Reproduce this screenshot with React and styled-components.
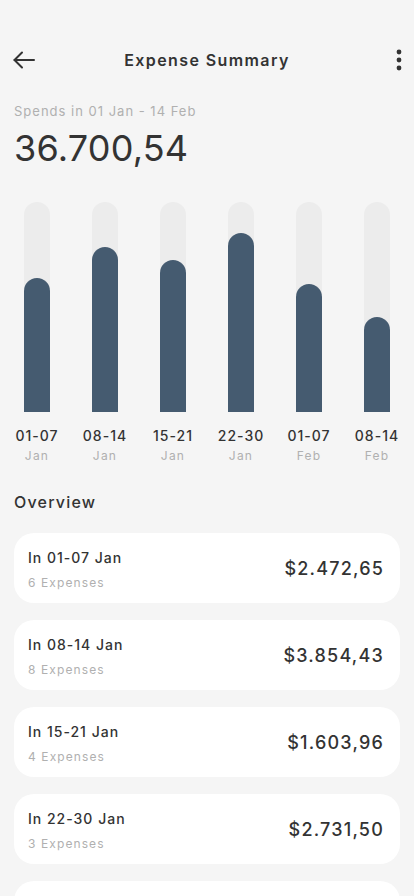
import React from 'react'
import styled, { createGlobalStyle } from 'styled-components'

const GlobalStyle = createGlobalStyle`
  body {
    margin: 0;
    background: #f5f5f5;
    font-family: Inter, "Open Sans", sans-serif;
    color: #333;
  }
`

const Page = styled.div`
  width: 414px;
  min-height: 896px;
  box-sizing: border-box;
  padding: 0 14px 40px;
  background: #f5f5f5;
`

const Header = styled.header`
  height: 120px;
  padding-top: 48px;
  box-sizing: border-box;
  display: flex;
  align-items: flex-start;
  justify-content: space-between;
  margin: 0 -11px 0 -2px;
`

const IconButton = styled.button`
  width: 24px;
  height: 24px;
  padding: 0;
  border: 0;
  background: none;
  display: flex;
  align-items: center;
  justify-content: center;
  color: #333;
`

const Title = styled.h1`
  margin: 2px 9px 0 0;
  font-size: 16px;
  font-weight: 600;
  letter-spacing: 1.4px;
  color: #333;
`

const Subtitle = styled.div`
  margin-top: -17px;
  font-size: 13px;
  letter-spacing: 1px;
  color: #b0b0b0;
`

const Total = styled.div`
  margin-top: 7px;
  font-size: 36px;
  font-weight: 400;
  letter-spacing: 0.2px;
  color: #333;
`

const Chart = styled.div`
  margin-top: 32px;
  display: flex;
  justify-content: space-between;
`

const Column = styled.div`
  width: 46px;
  display: flex;
  flex-direction: column;
  align-items: center;
`

const Track = styled.div`
  width: 26px;
  height: 210px;
  border-radius: 13px 13px 0 0;
  background: #ececec;
  display: flex;
  align-items: flex-end;
`

const Fill = styled.div`
  width: 100%;
  border-radius: 13px 13px 0 0;
  background: #455b70;
`

const Range = styled.div`
  margin-top: 15px;
  font-size: 14px;
  font-weight: 500;
  letter-spacing: 1px;
  color: #333;
  white-space: nowrap;
`

const Month = styled.div`
  margin-top: 4px;
  font-size: 12px;
  letter-spacing: 1.2px;
  color: #b0b0b0;
`

const SectionTitle = styled.h2`
  margin: 29px 0 21px;
  font-size: 16px;
  font-weight: 500;
  letter-spacing: 1.2px;
  color: #333;
`

const List = styled.div`
  display: flex;
  flex-direction: column;
  gap: 17px;
`

const Card = styled.div`
  height: 70px;
  box-sizing: border-box;
  padding: 3px 16px 0 14px;
  border-radius: 20px;
  background: #fff;
  display: flex;
  align-items: center;
  justify-content: space-between;
`

const CardInfo = styled.div`
  display: flex;
  flex-direction: column;
  gap: 9px;
`

const CardTitle = styled.div`
  font-size: 14px;
  font-weight: 500;
  letter-spacing: 1px;
  color: #333;
`

const CardSub = styled.div`
  font-size: 12px;
  letter-spacing: 1.1px;
  color: #b0b0b0;
`

const Amount = styled.div`
  margin-top: -3px;
  font-size: 18px;
  font-weight: 500;
  letter-spacing: 1.2px;
  color: #333;
`

const weeks = [
  { range: '01-07', month: 'Jan', fill: 134, count: 6, amount: '$2.472,65' },
  { range: '08-14', month: 'Jan', fill: 165, count: 8, amount: '$3.854,43' },
  { range: '15-21', month: 'Jan', fill: 152, count: 4, amount: '$1.603,96' },
  { range: '22-30', month: 'Jan', fill: 179, count: 3, amount: '$2.731,50' },
  { range: '01-07', month: 'Feb', fill: 128, count: 5, amount: '$2.118,20' },
  { range: '08-14', month: 'Feb', fill: 95, count: 2, amount: '$1.420,80' },
]

const BackIcon = () => (
  <svg width="22" height="18" viewBox="0 0 22 18" fill="none" stroke="#333" strokeWidth="2" strokeLinecap="round" strokeLinejoin="round">
    <path d="M21 9H1.5" />
    <path d="M9 1.5L1.5 9L9 16.5" />
  </svg>
)

const MoreIcon = () => (
  <svg width="6" height="22" viewBox="0 0 6 22" fill="#333">
    <circle cx="3" cy="3" r="2.4" />
    <circle cx="3" cy="11" r="2.4" />
    <circle cx="3" cy="19" r="2.4" />
  </svg>
)

export default function App() {
  return (
    <Page>
      <GlobalStyle />
      <Header>
        <IconButton><BackIcon /></IconButton>
        <Title>Expense Summary</Title>
        <IconButton><MoreIcon /></IconButton>
      </Header>
      <Subtitle>Spends in 01 Jan - 14 Feb</Subtitle>
      <Total>36.700,54</Total>
      <Chart>
        {weeks.map((w, i) => (
          <Column key={i}>
            <Track>
              <Fill style={{ height: w.fill }} />
            </Track>
            <Range>{w.range}</Range>
            <Month>{w.month}</Month>
          </Column>
        ))}
      </Chart>
      <SectionTitle>Overview</SectionTitle>
      <List>
        {weeks.map((w, i) => (
          <Card key={i}>
            <CardInfo>
              <CardTitle>In {w.range} {w.month}</CardTitle>
              <CardSub>{w.count} Expenses</CardSub>
            </CardInfo>
            <Amount>{w.amount}</Amount>
          </Card>
        ))}
      </List>
    </Page>
  )
}
